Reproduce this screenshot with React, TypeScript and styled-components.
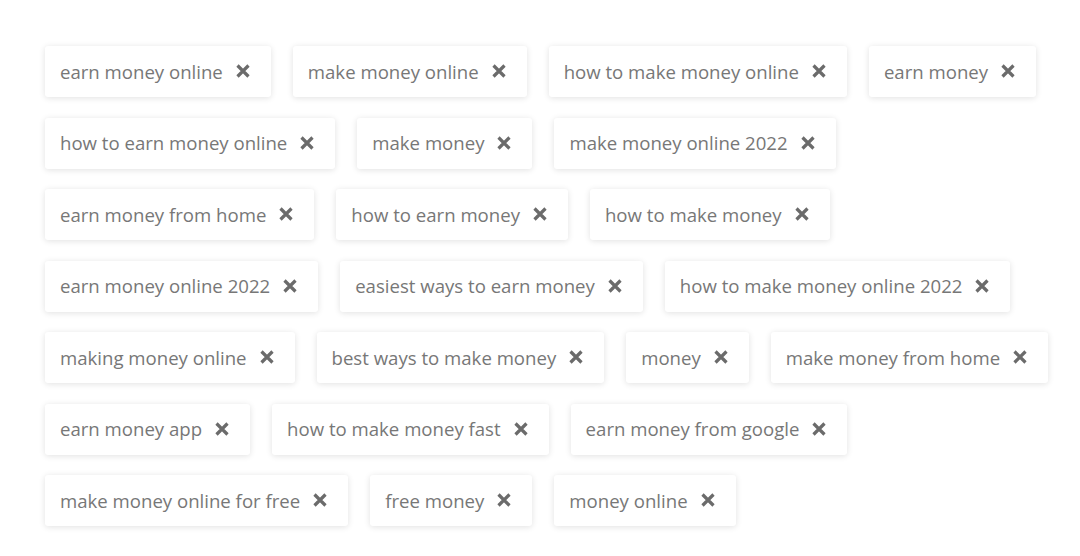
import React from "react";
import styled, { createGlobalStyle } from "styled-components";

const Global = createGlobalStyle`
  html, body { margin: 0; padding: 0; background: #fff; }
  body { font-family: "Open Sans", "Liberation Sans", sans-serif; }
`;

const Page = styled.div`
  display: flex;
  flex-direction: column;
  gap: 20.5px;
  padding: 46px 0 30px 45px;
`;

const Row = styled.div`
  display: flex;
  gap: 22px;
`;

const Tag = styled.div`
  display: flex;
  align-items: center;
  gap: 13px;
  height: 51px;
  padding: 0 21px 1px 15px;
  background: #fff;
  border-radius: 3px;
  box-shadow: 0 1px 6px rgba(0, 0, 0, 0.12);
  box-sizing: border-box;
`;

const Label = styled.span`
  font-size: 18.6px;
  color: #777;
  white-space: nowrap;
`;

const Close = styled.svg`
  width: 14px;
  height: 14px;
  flex: none;
`;

const rows = [
  ["earn money online", "make money online", "how to make money online", "earn money"],
  ["how to earn money online", "make money", "make money online 2022"],
  ["earn money from home", "how to earn money", "how to make money"],
  ["earn money online 2022", "easiest ways to earn money", "how to make money online 2022"],
  ["making money online", "best ways to make money", "money", "make money from home"],
  ["earn money app", "how to make money fast", "earn money from google"],
  ["make money online for free", "free money", "money online"],
];

const X = () => (
  <Close viewBox="0 0 14 14">
    <path d="M1.5 1.5 L12.5 12.5 M12.5 1.5 L1.5 12.5" stroke="#6b6b6b" strokeWidth="3.2" />
  </Close>
);

export default function App() {
  return (
    <>
      <Global />
      <Page>
        {rows.map((r, i) => (
          <Row key={i}>
            {r.map((t) => (
              <Tag key={t}>
                <Label>{t}</Label>
                <X />
              </Tag>
            ))}
          </Row>
        ))}
      </Page>
    </>
  );
}
